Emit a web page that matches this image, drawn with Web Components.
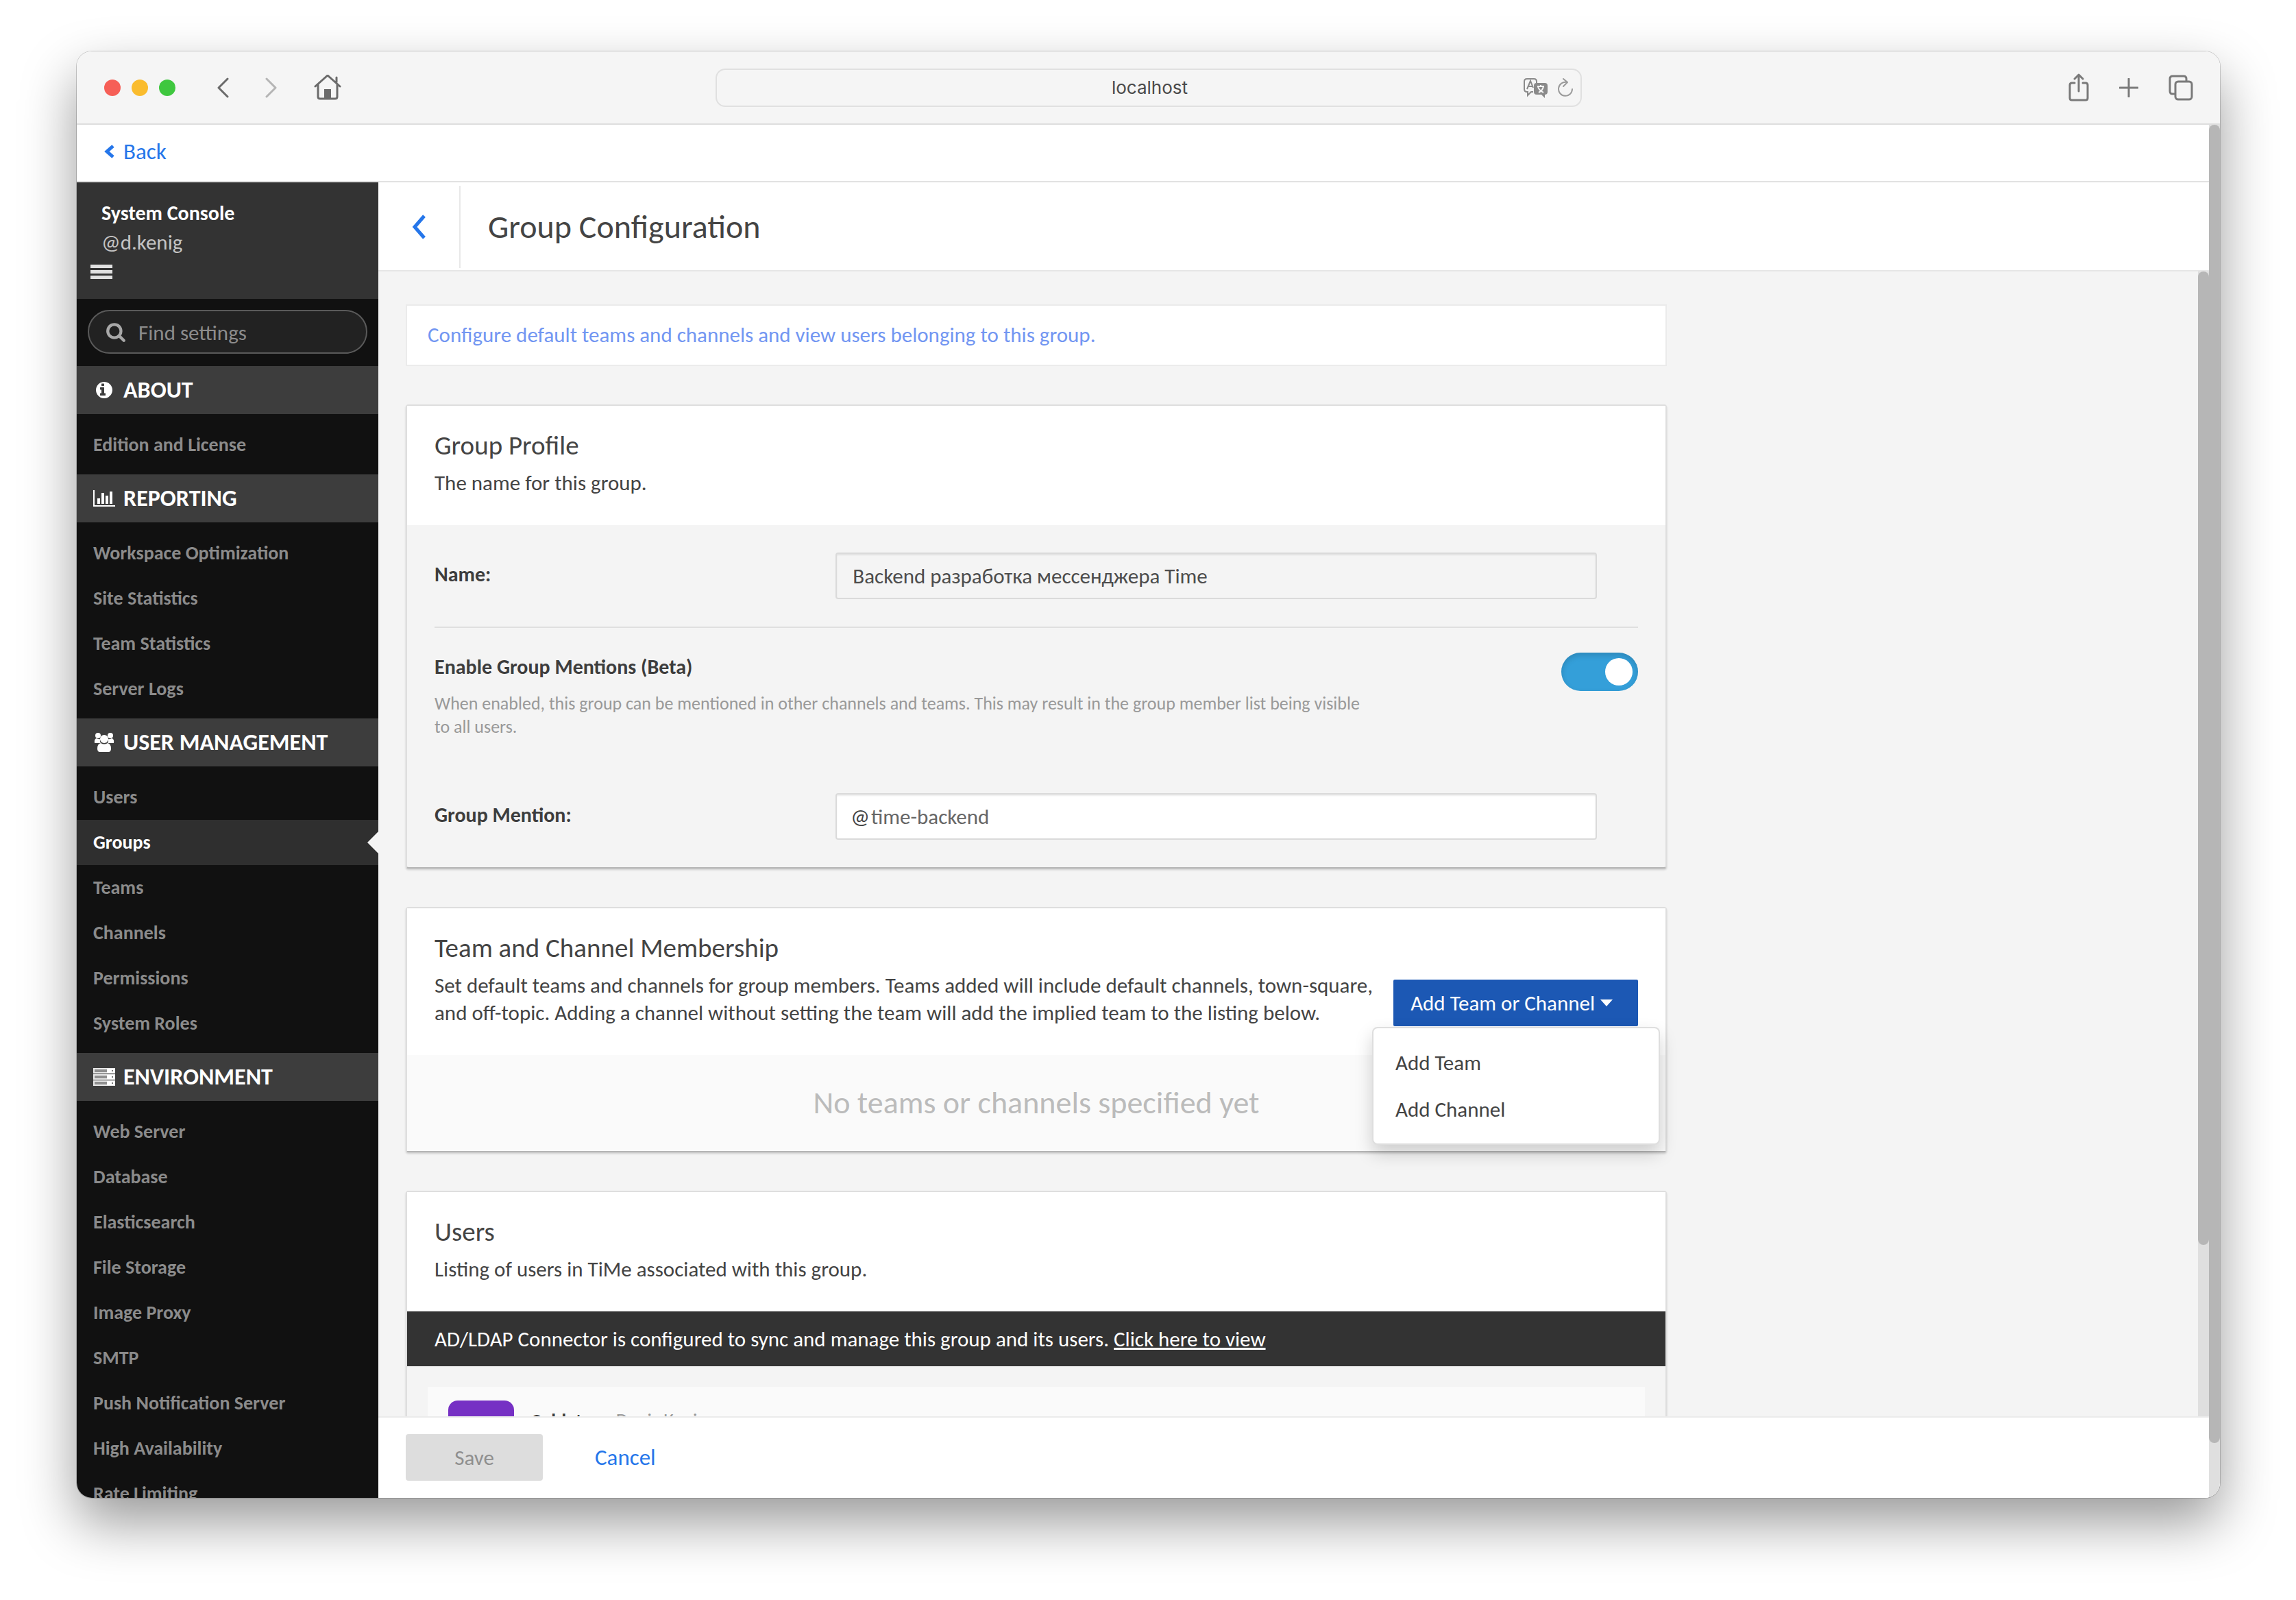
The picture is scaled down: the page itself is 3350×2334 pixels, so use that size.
<!DOCTYPE html>
<html lang="en">

<head>
    <meta charset="UTF-8">
    <meta name="viewport"
        content="width=device-width, initial-scale=1.0">
    <title>System Console - Group Configuration</title>
    <style>
        body {
            margin: 0;
            background: #fff;
            color: #444;
            font-family: Carlito, Lato, "Open Sans", sans-serif;
            font-size: 31px;
            line-height: 40px;
        }
    </style>
</head>

<body>
    <script>
        const ICONS = {
            back: ['0 0 18 30', '<path d="M16 2 3 15l13 13" fill="none" stroke="currentColor" stroke-width="3" stroke-linecap="round" stroke-linejoin="round"/>'],
            forward: ['0 0 18 30', '<path d="m2 2 13 13L2 28" fill="none" stroke="currentColor" stroke-width="3" stroke-linecap="round" stroke-linejoin="round"/>'],
            home: ['0 0 40 38', '<g fill="none" stroke="currentColor" stroke-width="3" stroke-linecap="round" stroke-linejoin="round"><path d="M2 17 20 1l18 16M6 14v18q0 3 3 3h22q3 0 3-3V14M33 11V4"/></g><path d="M15 21h10v14H15z" fill="currentColor"/>'],
            translate: ['0 0 38 30', '<path d="M15 21h-3l-5 5v-5H6q-4 0-4-4V6q0-4 4-4h10q4 0 4 4v2" fill="none" stroke="currentColor" stroke-width="2"/><path d="m6 17 5-12 4 10M8 13h6" fill="none" stroke="currentColor" stroke-width="2"/><path d="M20 8h12q4 0 4 4v9q0 4-4 4v5l-5-5h-7q-4 0-4-4v-9q0-4 4-4z" fill="currentColor"/><path d="M21 13h10M26 11v2M23 22q6-3 7-9M22 14q2 5 8 8" fill="none" stroke="#f5f5f5" stroke-width="2"/>'],
            reload: ['0 0 24 30', '<path d="M14 7a10 10 0 1 0 8 10M9 2l6 5-6 6" fill="none" stroke="currentColor" stroke-width="2" stroke-linecap="round" stroke-linejoin="round"/>'],
            share: ['0 0 30 42', '<path d="M9 14H5q-3 0-3 3v19q0 3 3 3h20q3 0 3-3V17q0-3-3-3h-4M15 26V2M9 8l6-6 6 6" fill="none" stroke="currentColor" stroke-width="3" stroke-linecap="round" stroke-linejoin="round"/>'],
            plus: ['0 0 28 28', '<path d="M14 1v26M1 14h26" stroke="currentColor" stroke-width="3" stroke-linecap="round"/>'],
            tabs: ['0 0 36 38', '<g fill="none" stroke="currentColor" stroke-width="3"><rect x="10" y="10" width="24" height="26" rx="4"/><path d="M10 28H6q-4 0-4-4V6q0-4 4-4h16q4 0 4 4v4"/></g>'],
            backSmall: ['0 0 16 20', '<path d="M13 2 4 10l9 8" fill="none" stroke="currentColor" stroke-width="5"/>'],
            chevron: ['0 0 20 36', '<path d="M18 2 4 18l14 16" fill="none" stroke="currentColor" stroke-width="5"/>'],
            menu: ['0 0 32 22', '<path d="M0 0h32v5H0zM0 8h32v5H0zM0 16h32v5H0z" fill="currentColor"/>'],
            caret: ['0 0 18 10', '<path d="M0 0h18l-9 10z" fill="currentColor"/>'],
            search: ['0 0 1792 1792', '<path fill="currentColor" d="M1216 832q0-185-131.500-316.500t-316.500-131.500-316.500 131.500-131.500 316.500 131.500 316.500 316.500 131.500 316.500-131.500 131.500-316.500zm512 832q0 52-38 90t-90 38q-54 0-90-38l-343-342q-179 124-399 124-143 0-273.500-55.500t-225-150-150-225-55.500-273.500 55.500-273.500 150-225 225-150 273.500-55.500 273.500 55.500 225 150 150 225 55.500 273.500q0 220-124 399l343 343q37 37 37 90z"/>'],
            info: ['0 0 1792 1792', '<path fill="currentColor" d="M1024 1376v-160q0-14-9-23t-23-9h-96v-512q0-14-9-23t-23-9h-320q-14 0-23 9t-9 23v160q0 14 9 23t23 9h96v320h-96q-14 0-23 9t-9 23v160q0 14 9 23t23 9h448q14 0 23-9t9-23zm-128-896v-160q0-14-9-23t-23-9h-192q-14 0-23 9t-9 23v160q0 14 9 23t23 9h192q14 0 23-9t9-23zm768 416q0 209-103 385.500t-279.500 279.500-385.500 103-385.500-103-279.500-279.500-103-385.500 103-385.500 279.500-279.500 385.500-103 385.500 103 279.500 279.500 103 385.500z"/>'],
            chart: ['0 0 2048 1792', '<path fill="currentColor" d="M640 896v512h-256v-512h256zm384-512v1024h-256v-1024h256zm1024 1152v128h-2048v-1536h128v1408h1920zm-640-896v768h-256v-768h256zm384-384v1152h-256v-1152h256z"/>'],
            users: ['0 0 30 28', '<g fill="currentColor"><circle cx="6" cy="4" r="4"/><circle cx="24" cy="4" r="4"/><path d="M1 15q-1-6 3-7 3 2 6 1-2 3 0 6zM29 15q1-6-3-7-3 2-6 1 2 3 0 6z"/><circle cx="15" cy="9" r="6"/><path d="M10 15q5 3 10 0 5 1 5 8 0 5-4 5H9q-4 0-4-5 0-7 5-8z"/></g>'],
            server: ['0 0 32 28', '<g fill="#8f8f8f" stroke="#e8e8e8" stroke-width="2"><path d="M1 2h30v6H1zM1 11h30v6H1zM1 20h30v6H1z"/></g><path d="M20 2h11v6H20zM20 11h11v6H20zM20 20h11v6H20z" fill="#fff"/><path d="M27 4h2v2h-2zM27 13h2v2h-2zM27 22h2v2h-2z" fill="#777"/>']
        };

        // shared helper: every element below renders once into an open root
        class BaseElement extends HTMLElement {
            connectedCallback() {
                if (this.shadowRoot) return;
                this.attachShadow({ mode: 'open' }).innerHTML = `<style>*{box-sizing:border-box;}
                    button,input{font:inherit;color:inherit;margin:0;}
                    button{cursor:pointer;}</style>${this.render()}`;
            }
        }

        customElements.define('ui-icon', class extends BaseElement {
            render() {
                const [box, body] = ICONS[this.getAttribute('name')];
                return `<style>
                    :host{display:block;flex:none;}
                    svg{display:block;width:100%;height:100%;}
                </style><svg viewBox="${box}" aria-hidden="true">${body}</svg>`;
            }
        });

        customElements.define('scroll-track', class extends BaseElement {
            render() {
                return `<style>
                    :host{display:block;flex:none;width:16px;background:#dfdfdf;}
                    div{height:${this.getAttribute('size')}%;background:#b6b6b6;border-radius:8px;}
                </style><div></div>`;
            }
        });

        customElements.define('browser-toolbar', class extends BaseElement {
            render() {
                return `<style>
                    :host{display:grid;grid-template-columns:1fr 1264px 1fr;align-items:center;flex:none;height:107px;
                        background:#f5f5f5;border-bottom:2px solid #dedede;color:#6b6b6b;}
                    button{border:0;padding:0;background:none;}
                    .left{display:flex;align-items:center;gap:53px;padding-left:40px;}
                    .lights{display:flex;gap:16px;margin-right:7px;}
                    .lights i{width:24px;height:24px;border-radius:50%;}
                    .right{display:flex;align-items:center;justify-content:flex-end;gap:44px;padding-right:39px;color:#7a7a7a;}
                    .url{display:flex;align-items:center;gap:12px;height:56px;padding:0 10px 0 100px;border:2px solid #e0e0e0;border-radius:14px;}
                    .url input{flex:1;min-width:0;border:0;padding:0;background:none;text-align:center;color:#4a4a4a;
                        font-family:Inter,sans-serif;font-size:26px;}
                    .arrow{width:18px;height:30px;}
                    .off{color:#b5b5b5;}
                    .home{width:40px;height:38px;}
                    .tr{width:38px;height:30px;color:#8a8a8a;}
                    .re{width:24px;height:30px;color:#9a9a9a;}
                    .share{width:30px;height:42px;}
                    .plus{width:28px;height:28px;}
                    .tabs{width:36px;height:38px;}
                </style>
                <div class="left">
                    <div class="lights"><i style="background:#f65f57"></i><i style="background:#fabc2e"></i><i style="background:#3fc73f"></i></div>
                    <button aria-label="Back"><ui-icon class="arrow" name="back"></ui-icon></button>
                    <button aria-label="Forward"><ui-icon class="arrow off" name="forward"></ui-icon></button>
                    <button aria-label="Home"><ui-icon class="home" name="home"></ui-icon></button>
                </div>
                <div class="url">
                    <input type="text" aria-label="Address" value="localhost">
                    <button aria-label="Translate"><ui-icon class="tr" name="translate"></ui-icon></button>
                    <button aria-label="Reload"><ui-icon class="re" name="reload"></ui-icon></button>
                </div>
                <div class="right">
                    <button aria-label="Share"><ui-icon class="share" name="share"></ui-icon></button>
                    <button aria-label="New tab"><ui-icon class="plus" name="plus"></ui-icon></button>
                    <button aria-label="Show tabs"><ui-icon class="tabs" name="tabs"></ui-icon></button>
                </div>`;
            }
        });

        customElements.define('browser-window', class extends BaseElement {
            render() {
                return `<style>
                    :host{display:block;box-sizing:border-box;height:100vh;padding:75px 111px 149px 112px;overflow:hidden;}
                    .window{display:flex;flex-direction:column;height:100%;border-radius:22px;overflow:hidden;background:#fff;}
                    .shadow{height:100%;border-radius:22px;box-shadow:0 0 0 1px rgba(0,0,0,.18),0 36px 80px rgba(0,0,0,.4);}
                    .view{flex:1;display:flex;min-height:0;}
                    .page{flex:1;min-width:0;display:flex;flex-direction:column;}
                </style>
                <div class="shadow"><div class="window">
                    <browser-toolbar></browser-toolbar>
                    <div class="view">
                        <div class="page"><slot></slot></div>
                        <scroll-track size="96"></scroll-track>
                    </div>
                </div></div>`;
            }
        });

        customElements.define('back-bar', class extends BaseElement {
            render() {
                return `<style>
                    :host{display:flex;align-items:center;flex:none;height:84px;padding:0 40px 4px;border-bottom:2px solid #e2e2e2;box-sizing:border-box;}
                    a{display:flex;align-items:center;gap:12px;color:#2576ea;text-decoration:none;font-size:33px;}
                    ui-icon{width:16px;height:20px;}
                </style><a href="#"><ui-icon name="backSmall"></ui-icon><slot></slot></a>`;
            }
        });

        customElements.define('side-section', class extends BaseElement {
            render() {
                return `<style>
                    :host{display:block;}
                    h4{display:flex;align-items:center;gap:12px;height:70px;margin:0;padding:0 24px;background:#3d3d3d;
                        color:#fff;font-size:34px;font-weight:600;text-transform:uppercase;}
                    ui-icon{width:32px;height:28px;}
                    ul{list-style:none;margin:0;padding:12px 0 10px;}
                </style>
                <h4><ui-icon name="${this.getAttribute('icon')}"></ui-icon>${this.getAttribute('heading')}</h4>
                <ul><slot></slot></ul>`;
            }
        });

        customElements.define('side-item', class extends BaseElement {
            render() {
                return `<style>
                    :host{display:block;}
                    li{list-style:none;}
                    a{display:flex;align-items:center;justify-content:space-between;height:66px;padding-left:24px;
                        color:#8b8b8b;font-size:28px;font-weight:600;text-decoration:none;}
                    :host([active]) a{background:#2f2f2f;color:#fff;}
                    :host([active]) a::after{content:"";border:16px solid transparent;border-left:0;border-right-color:#f4f4f4;}
                </style><li><a href="#"><slot></slot></a></li>`;
            }
        });

        customElements.define('admin-sidebar', class extends BaseElement {
            render() {
                return `<style>
                    :host{display:block;flex:none;width:440px;overflow:hidden;background:#111;}
                    header{height:170px;padding:24px 20px 0;background:#333;line-height:42px;}
                    strong,span{display:block;padding-left:16px;}
                    strong{color:#fff;font-size:30px;}
                    span{color:#c4c4c4;}
                    header button{display:block;margin-top:12px;padding:0;border:0;background:none;color:#e0e0e0;}
                    header ui-icon{width:32px;height:22px;}
                    .search{display:flex;align-items:center;gap:18px;height:64px;margin:16px 16px 18px;padding:0 24px;
                        border:2px solid #5a5a5a;border-radius:32px;background:#222;color:#a8a8a8;}
                    .search ui-icon{width:30px;height:30px;}
                    .search input{flex:1;min-width:0;padding:2px 0 0;border:0;background:none;outline:0;}
                    .search input::placeholder{color:#8c8c8c;}
                </style>
                <header>
                    <strong>System Console</strong>
                    <span>@d.kenig</span>
                    <button aria-label="Menu"><ui-icon name="menu"></ui-icon></button>
                </header>
                <label class="search"><ui-icon name="search"></ui-icon><input type="text" placeholder="Find settings" aria-label="Find settings"></label>
                <slot></slot>`;
            }
        });

        customElements.define('page-header', class extends BaseElement {
            render() {
                return `<style>
                    :host{display:flex;align-items:center;flex:none;box-sizing:border-box;height:130px;padding-top:2px;background:#fff;border-bottom:2px solid #e6e6e6;}
                    a{display:flex;align-items:center;justify-content:center;width:120px;height:120px;border-right:2px solid #e8e8e8;color:#2576ea;}
                    ui-icon{width:20px;height:36px;}
                    h1{margin:0;padding-left:40px;font-size:48px;font-weight:400;}
                </style><a href="#" aria-label="Back to groups"><ui-icon name="chevron"></ui-icon></a><h1><slot></slot></h1>`;
            }
        });

        customElements.define('info-banner', class extends BaseElement {
            render() {
                return `<style>
                    :host{display:block;padding:22px 30px 24px;background:#fff;border:2px solid #ebebeb;color:#7296f2;}
                </style><slot></slot>`;
            }
        });

        customElements.define('admin-panel', class extends BaseElement {
            render() {
                return `<style>
                    :host{display:block;border-radius:4px;border:2px solid #dedede;border-bottom-color:#b5b5b5;box-shadow:0 2px 3px rgba(0,0,0,.16);background:#f4f4f4;}
                    header{display:flex;align-items:flex-end;gap:24px;padding:38px 40px 42px;background:#fff;}
                    .text{flex:1;}
                    h2{margin:0 0 14px;font-size:39px;font-weight:400;}
                    p{margin:0;}
                </style>
                <header>
                    <div class="text"><h2>${this.getAttribute('heading')}</h2><p>${this.getAttribute('subtitle')}</p></div>
                    <slot name="action"></slot>
                </header>
                <slot></slot>`;
            }
        });

        customElements.define('group-profile', class extends BaseElement {
            render() {
                return `<style>
                    :host{display:block;padding:0 40px 40px;}
                    .row{display:grid;grid-template-columns:1fr 2fr;}
                    .line{padding:40px 0;border-bottom:2px solid #dfdfdf;}
                    label{font-size:30px;font-weight:600;color:#3d3d3d;}
                    .row label{padding-top:12px;}
                    .control{display:flex;align-items:center;height:68px;margin-right:60px;padding:0 23px;border:2px solid #dadada;border-radius:4px;
                        background:#fff;box-shadow:inset 0 2px 2px rgba(0,0,0,.075);}
                    .readonly{background:#f4f4f4;color:#4d4d4d;}
                    input[type=text]{flex:1;min-width:0;padding:0;border:0;background:none;}
                    .mention{padding-left:20px;}
                    .mention input{padding-left:2px;color:#666;}
                    .switch{display:flex;justify-content:space-between;padding:36px 0 80px;}
                    p{max-width:1360px;margin:16px 0 0;color:#999;font-size:26px;line-height:34px;}
                    input[type=checkbox]{appearance:none;flex:none;width:112px;height:56px;padding:8px;border-radius:28px;background:#349fd9;
                        box-shadow:inset 0 4px 8px rgba(0,0,0,.15);}
                    input[type=checkbox]::before{content:"";display:block;width:40px;height:40px;margin-left:auto;border-radius:50%;background:#fff;}
                </style>
                <div class="row line">
                    <label for="name">Name:</label>
                    <div class="control readonly"><input id="name" type="text" readonly value="Backend разработка мессенджера Time"></div>
                </div>
                <div class="switch">
                    <div>
                        <label for="enable">Enable Group Mentions (Beta)</label>
                        <p>When enabled, this group can be mentioned in other channels and teams. This may result in the group member list being visible to all users.</p>
                    </div>
                    <input id="enable" type="checkbox" role="switch" checked>
                </div>
                <div class="row">
                    <label for="mention">Group Mention:</label>
                    <div class="control mention">@<input id="mention" type="text" value="time-backend"></div>
                </div>`;
            }
        });

        customElements.define('add-menu', class extends BaseElement {
            render() {
                return `<style>
                    :host{display:block;position:relative;}
                    .toggle{display:flex;align-items:center;gap:8px;height:68px;padding:0 37px 0 25px;border:0;border-radius:2px;background:#1c58b4;color:#fff;}
                    ui-icon{width:18px;height:10px;}
                    .menu{position:absolute;top:69px;right:-32px;z-index:1;width:420px;padding:16px 0;border:2px solid #dedede;border-radius:8px;
                        background:#fff;box-shadow:0 12px 26px rgba(0,0,0,.18);}
                    .menu button{display:block;width:100%;height:68px;padding:0 32px;border:0;background:none;text-align:left;}
                </style>
                <button class="toggle" aria-haspopup="true" aria-expanded="true">Add Team or Channel<ui-icon name="caret"></ui-icon></button>
                <div class="menu" role="menu">
                    <button role="menuitem">Add Team</button>
                    <button role="menuitem">Add Channel</button>
                </div>`;
            }
        });

        customElements.define('empty-list', class extends BaseElement {
            render() {
                return `<style>
                    :host{display:block;padding:42px 0 44px;background:#fafafa;color:#bbb;font-size:46px;line-height:54px;text-align:center;}
                </style><slot></slot>`;
            }
        });

        customElements.define('group-users', class extends BaseElement {
            render() {
                return `<style>
                    :host{display:block;padding-bottom:30px;}
                    .banner{padding:20px 40px;background:#333;color:#fff;}
                    .banner a{color:inherit;}
                    .user{display:flex;gap:26px;margin:30px 30px 0;padding:20px 30px;background:#fafafa;}
                    .avatar{width:96px;height:96px;border-radius:14px;background:#7630c4;}
                    .name{padding-top:10px;color:#999;font-size:28px;}
                    b{color:#3d3d3d;}
                </style>
                <div class="banner">AD/LDAP Connector is configured to sync and manage this group and its users. <a href="#">Click here to view</a></div>
                <div class="user"><div class="avatar"></div><div class="name"><b>Soldatov</b> - Denis Kenig</div></div>`;
            }
        });

        customElements.define('save-bar', class extends BaseElement {
            render() {
                return `<style>
                    :host{display:flex;align-items:center;gap:76px;flex:none;box-sizing:border-box;height:119px;padding:0 40px 2px;background:#fff;border-top:2px solid #ebebeb;}
                    button{width:200px;height:68px;border:0;border-radius:4px;background:#ddd;color:#8f8f8f;}
                    a{color:#2576ea;font-size:33px;text-decoration:none;}
                </style><button disabled>Save</button><a href="#">Cancel</a>`;
            }
        });

        customElements.define('admin-console', class extends BaseElement {
            render() {
                return `<style>
                    :host{display:flex;flex:1;min-height:0;}
                    main{flex:1;min-width:0;display:flex;flex-direction:column;}
                    .scroll{flex:1;display:flex;min-height:0;background:#f4f4f4;}
                    .content{flex:1;min-width:0;overflow:hidden;padding:48px 40px 0;}
                    .stack{display:flex;flex-direction:column;gap:56px;max-width:1840px;}
                </style>
                <slot name="sidebar"></slot>
                <main>
                    <slot name="header"></slot>
                    <div class="scroll">
                        <div class="content"><div class="stack"><slot></slot></div></div>
                        <scroll-track size="85"></scroll-track>
                    </div>
                    <slot name="footer"></slot>
                </main>`;
            }
        });
    </script>
    <browser-window>
        <back-bar>Back</back-bar>
        <admin-console>
            <admin-sidebar slot="sidebar">
                <side-section icon="info" heading="About">
                    <side-item>Edition and License</side-item>
                </side-section>
                <side-section icon="chart" heading="Reporting">
                    <side-item>Workspace Optimization</side-item>
                    <side-item>Site Statistics</side-item>
                    <side-item>Team Statistics</side-item>
                    <side-item>Server Logs</side-item>
                </side-section>
                <side-section icon="users" heading="User Management">
                    <side-item>Users</side-item>
                    <side-item active>Groups</side-item>
                    <side-item>Teams</side-item>
                    <side-item>Channels</side-item>
                    <side-item>Permissions</side-item>
                    <side-item>System Roles</side-item>
                </side-section>
                <side-section icon="server" heading="Environment">
                    <side-item>Web Server</side-item>
                    <side-item>Database</side-item>
                    <side-item>Elasticsearch</side-item>
                    <side-item>File Storage</side-item>
                    <side-item>Image Proxy</side-item>
                    <side-item>SMTP</side-item>
                    <side-item>Push Notification Server</side-item>
                    <side-item>High Availability</side-item>
                    <side-item>Rate Limiting</side-item>
                </side-section>
            </admin-sidebar>
            <page-header slot="header">Group Configuration</page-header>
            <info-banner>Configure default teams and channels and view users belonging to this group.</info-banner>
            <admin-panel heading="Group Profile"
                subtitle="The name for this group.">
                <group-profile></group-profile>
            </admin-panel>
            <admin-panel heading="Team and Channel Membership"
                subtitle="Set default teams and channels for group members. Teams added will include default channels, town-square, and off-topic. Adding a channel without setting the team will add the implied team to the listing below.">
                <add-menu slot="action"></add-menu>
                <empty-list>No teams or channels specified yet</empty-list>
            </admin-panel>
            <admin-panel heading="Users"
                subtitle="Listing of users in TiMe associated with this group.">
                <group-users></group-users>
            </admin-panel>
            <save-bar slot="footer"></save-bar>
        </admin-console>
    </browser-window>
</body>

</html>
